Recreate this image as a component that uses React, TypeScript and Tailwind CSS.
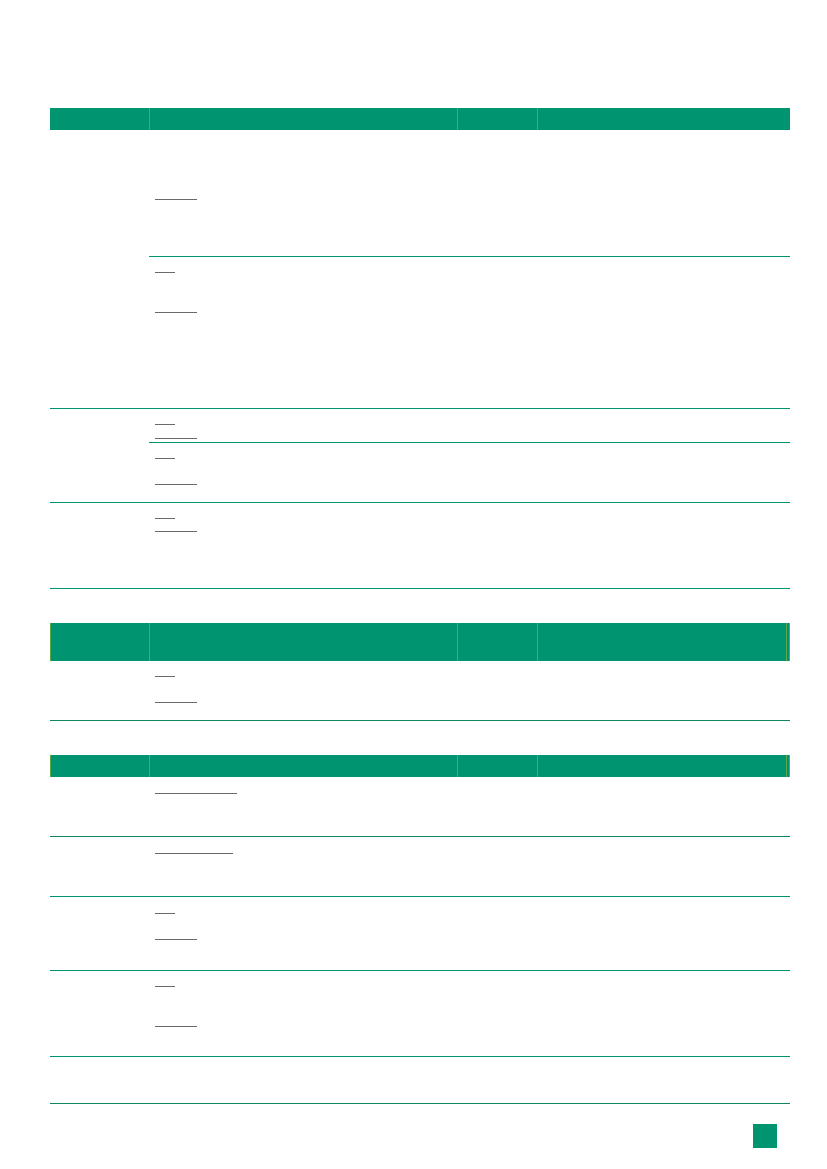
import React from "react";

const Short = ({ mt }: { mt: string }) => (
  <div className={`h-px w-[20px] bg-[#6a6a6a] ${mt}`} />
);

function Line({ cls }: { cls: string }) {
  return <div className={`h-px bg-[#6a6a6a] ${cls}`} />;
}

function Header({ h, edge }: { h: string; edge?: boolean }) {
  return (
    <div className={`flex ${h} bg-[#009470] ${edge ? "border-l border-[#5aa846]" : ""}`}>
      <div className={`${edge ? "w-[98px]" : "w-[99px]"} shrink-0`} />
      <div className="w-[308px] shrink-0 border-l border-[#5aa846]" />
      <div className="w-[80px] shrink-0 border-l border-[#5aa846]" />
      {edge ? (
        <>
          <div className="flex-1 border-l border-[#5aa846]" />
          <div className="w-[4px] shrink-0 border-l border-r border-[#5aa846]" />
        </>
      ) : (
        <div className="flex-1 border-l border-[#5aa846]" />
      )}
    </div>
  );
}

export default function App() {
  return (
    <div className="w-[827px] h-[1169px] bg-white pt-[108px] pl-[50px] pr-[37px] font-['Liberation_Sans',sans-serif]">
      {/* Table 1 */}
      <div className="flex flex-col">
        <Header h="h-[22px]" />
        {/* Group A */}
        <div className="flex border-b border-[#009470]">
          <div className="w-[99px] shrink-0" />
          <div className="flex-1 flex flex-col">
            <div className="h-[127px] border-b border-[#009470] pl-[6px]">
              <Line cls="w-[42px] mt-[69px]" />
            </div>
            <div className="h-[151px] pl-[6px]">
              <Short mt="mt-[15px]" />
              <Line cls="w-[42px] mt-[39px]" />
            </div>
          </div>
        </div>
        {/* Group B */}
        <div className="flex border-b border-[#009470]">
          <div className="w-[99px] shrink-0" />
          <div className="flex-1 flex flex-col">
            <div className="h-[34px] border-b border-[#009470] pl-[6px]">
              <Short mt="mt-[15px]" />
              <Line cls="w-[42px] mt-[13px]" />
            </div>
            <div className="h-[59px] pl-[6px]">
              <Short mt="mt-[15px]" />
              <Line cls="w-[42px] mt-[25px]" />
            </div>
          </div>
        </div>
        {/* Group C */}
        <div className="flex h-[86px] border-b border-[#009470]">
          <div className="w-[99px] shrink-0" />
          <div className="flex-1 pl-[6px]">
            <Short mt="mt-[15px]" />
            <Line cls="w-[42px] mt-[12px]" />
          </div>
        </div>
      </div>

      {/* Table 2 */}
      <div className="flex flex-col mt-[34px]">
        <Header h="h-[38px]" edge />
        <div className="flex h-[60px] border-b border-[#0f8763]">
          <div className="w-[99px] shrink-0" />
          <div className="flex-1 pl-[6px]">
            <Short mt="mt-[15px]" />
            <Line cls="w-[42px] mt-[25px]" />
          </div>
        </div>
      </div>

      {/* Table 3 */}
      <div className="flex flex-col mt-[34px]">
        <Header h="h-[22px]" edge />
        <div className="flex h-[60px] border-b border-[#0f8763]">
          <div className="w-[99px] shrink-0" />
          <div className="flex-1 pl-[6px]">
            <Line cls="w-[82px] mt-[16px]" />
          </div>
        </div>
        <div className="flex h-[60px] border-b border-[#009470]">
          <div className="w-[99px] shrink-0" />
          <div className="flex-1 pl-[6px]">
            <Line cls="w-[78px] mt-[16px]" />
          </div>
        </div>
        <div className="flex h-[74px] border-b border-[#009470]">
          <div className="w-[99px] shrink-0" />
          <div className="flex-1 pl-[6px]">
            <Short mt="mt-[16px]" />
            <Line cls="w-[42px] mt-[25px]" />
          </div>
        </div>
        <div className="flex h-[86px] border-b border-[#009470]">
          <div className="w-[99px] shrink-0" />
          <div className="flex-1 pl-[6px]">
            <Short mt="mt-[15px]" />
            <Line cls="w-[42px] mt-[39px]" />
          </div>
        </div>
        <div className="h-[47px] border-b border-[#0f8763]" />
      </div>

      {/* Page marker */}
      <div className="flex justify-end mt-[20px] pr-[13px]">
        <div className="w-[24px] h-[24px] bg-[#009470]" />
      </div>
    </div>
  );
}
